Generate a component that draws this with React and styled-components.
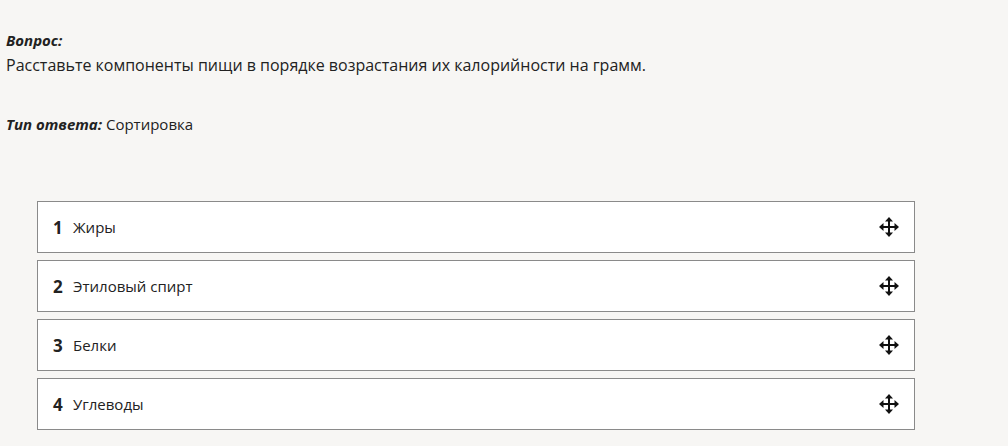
import React from 'react';
import styled, { createGlobalStyle } from 'styled-components';

const GlobalStyle = createGlobalStyle`
	html, body {
		margin: 0;
		padding: 0;
		background: #f7f6f4;
	}
	body {
		font-family: 'Open Sans', 'Noto Sans', sans-serif;
		color: #222;
	}
`;

const Page = styled.div`
	width: 1008px;
	height: 446px;
	padding: 29px 0 0 6px;
	box-sizing: border-box;
`;

const Label = styled.div`
	font-size: 15px;
	font-weight: 700;
	font-style: italic;
	line-height: 22px;
`;

const Text = styled.div`
	font-size: 16px;
	line-height: 22px;
	margin-top: 3px;
`;

const AnswerType = styled.div`
	font-size: 15px;
	line-height: 22px;
	margin-top: 37px;

	b {
		font-style: italic;
	}
`;

const List = styled.div`
	display: flex;
	flex-direction: column;
	gap: 7px;
	margin: 66px 0 0 31px;
	width: 878px;
`;

const Item = styled.div`
	display: flex;
	align-items: center;
	height: 52px;
	box-sizing: border-box;
	border: 1px solid #8a8a8a;
	background: #fff;
	padding: 0 14px 0 15px;
	font-size: 15px;
`;

const Num = styled.span`
	font-weight: 700;
	font-size: 17px;
	width: 20px;
`;

const Name = styled.span`
	flex: 1;
`;

const MoveIcon = () => (
	<svg width="22" height="22" viewBox="0 0 22 22" fill="#111" stroke="#111">
		<line x1="11" y1="4" x2="11" y2="18" strokeWidth="2" />
		<line x1="4" y1="11" x2="18" y2="11" strokeWidth="2" />
		<polygon points="11,1 7,5.5 15,5.5" stroke="none" />
		<polygon points="11,21 7,16.5 15,16.5" stroke="none" />
		<polygon points="1,11 5.5,7 5.5,15" stroke="none" />
		<polygon points="21,11 16.5,7 16.5,15" stroke="none" />
	</svg>
);

const items = ['Жиры', 'Этиловый спирт', 'Белки', 'Углеводы'];

const App = () => (
	<>
		<GlobalStyle />
		<Page>
			<Label>Вопрос:</Label>
			<Text>Расставьте компоненты пищи в порядке возрастания их калорийности на грамм.</Text>
			<AnswerType>
				<b>Тип ответа:</b> Сортировка
			</AnswerType>
			<List>
				{items.map((name, i) => (
					<Item key={name}>
						<Num>{i + 1}</Num>
						<Name>{name}</Name>
						<MoveIcon />
					</Item>
				))}
			</List>
		</Page>
	</>
);

export default App;
